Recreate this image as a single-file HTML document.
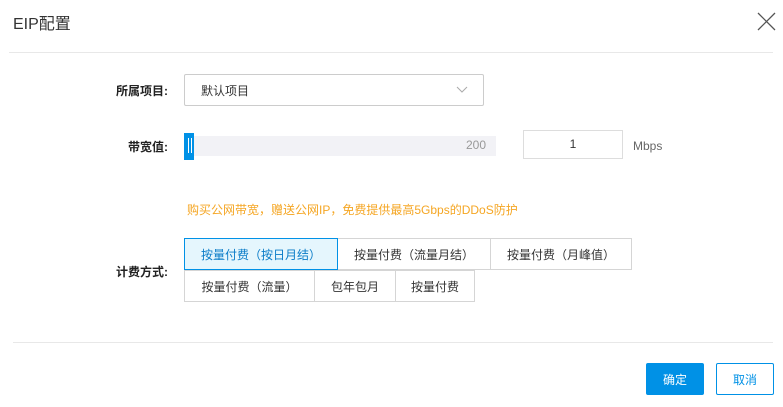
<!DOCTYPE html>
<html><head><meta charset="utf-8"><style>
*{margin:0;padding:0;box-sizing:border-box}
body{width:783px;height:407px;background:#fff;position:relative;font-family:"Liberation Sans","Noto Sans CJK SC",sans-serif;color:#333;font-size:12px;overflow:hidden}
.a{position:absolute}
.lbl{position:absolute;font-size:12px;color:#222;text-align:right;width:100px;font-weight:bold}
.btn{position:absolute;border:1px solid #d5d5d5;display:flex;align-items:center;justify-content:center;font-size:12px;color:#333;background:#fff}
</style></head><body>
<div class="a" style="left:13px;top:10px;font-size:16px;color:#333">EIP配置</div>
<svg class="a" style="left:757px;top:12px" width="19" height="19" viewBox="0 0 19 19"><path d="M1 1L18 18M18 1L1 18" stroke="#555" stroke-width="1.3" fill="none"/></svg>
<div class="a" style="left:9px;top:52px;width:764px;height:1px;background:#e8e8e8"></div>

<div class="lbl" style="left:68px;top:82px">所属项目:</div>
<div class="a" style="left:184px;top:74px;width:300px;height:32px;border:1px solid #ccc;border-radius:2px"></div>
<div class="a" style="left:201px;top:82px;color:#333">默认项目</div>
<svg class="a" style="left:456px;top:86px" width="12" height="7" viewBox="0 0 12 7"><path d="M1 1L6 6L11 1" stroke="#aaa" fill="none"/></svg>

<div class="lbl" style="left:68px;top:138px">带宽值:</div>
<div class="a" style="left:194px;top:136px;width:302px;height:20px;background:#f2f2f6"></div>
<div class="a" style="left:184px;top:133px;width:10px;height:27px;background:#0091e6"></div>
<div class="a" style="left:188px;top:138px;width:1px;height:15px;background:#fff"></div>
<div class="a" style="left:191px;top:138px;width:1px;height:15px;background:#fff"></div>
<div class="a" style="left:466px;top:138px;color:#999">200</div>
<div class="a" style="left:523px;top:130px;width:100px;height:29px;border:1px solid #ddd;text-align:center;line-height:27px">1</div>
<div class="a" style="left:633px;top:139px;color:#666">Mbps</div>

<div class="a" style="left:187px;top:201px;color:#f5a623">购买公网带宽，赠送公网IP，免费提供最高5Gbps的DDoS防护</div>

<div class="lbl" style="left:68px;top:263px">计费方式:</div>
<div class="btn" style="left:337px;top:238px;width:154px;height:32px">按量付费（流量月结）</div>
<div class="btn" style="left:490px;top:238px;width:142px;height:32px">按量付费（月峰值）</div>
<div class="btn" style="left:184px;top:238px;width:154px;height:32px;background:#e5f6fd;border-color:#0091e6;color:#0a7cc8">按量付费（按日月结）</div>
<div class="btn" style="left:184px;top:270px;width:131px;height:32px">按量付费（流量）</div>
<div class="btn" style="left:314px;top:270px;width:82px;height:32px">包年包月</div>
<div class="btn" style="left:395px;top:270px;width:80px;height:32px">按量付费</div>

<div class="a" style="left:13px;top:342px;width:760px;height:1px;background:#e8e8e8"></div>
<div class="btn" style="left:646px;top:363px;width:58px;height:32px;background:#0091e6;border-color:#0091e6;color:#fff;border-radius:2px">确定</div>
<div class="btn" style="left:716px;top:363px;width:58px;height:32px;border-color:#0091e6;color:#0091e6;border-radius:2px">取消</div>
</body></html>
